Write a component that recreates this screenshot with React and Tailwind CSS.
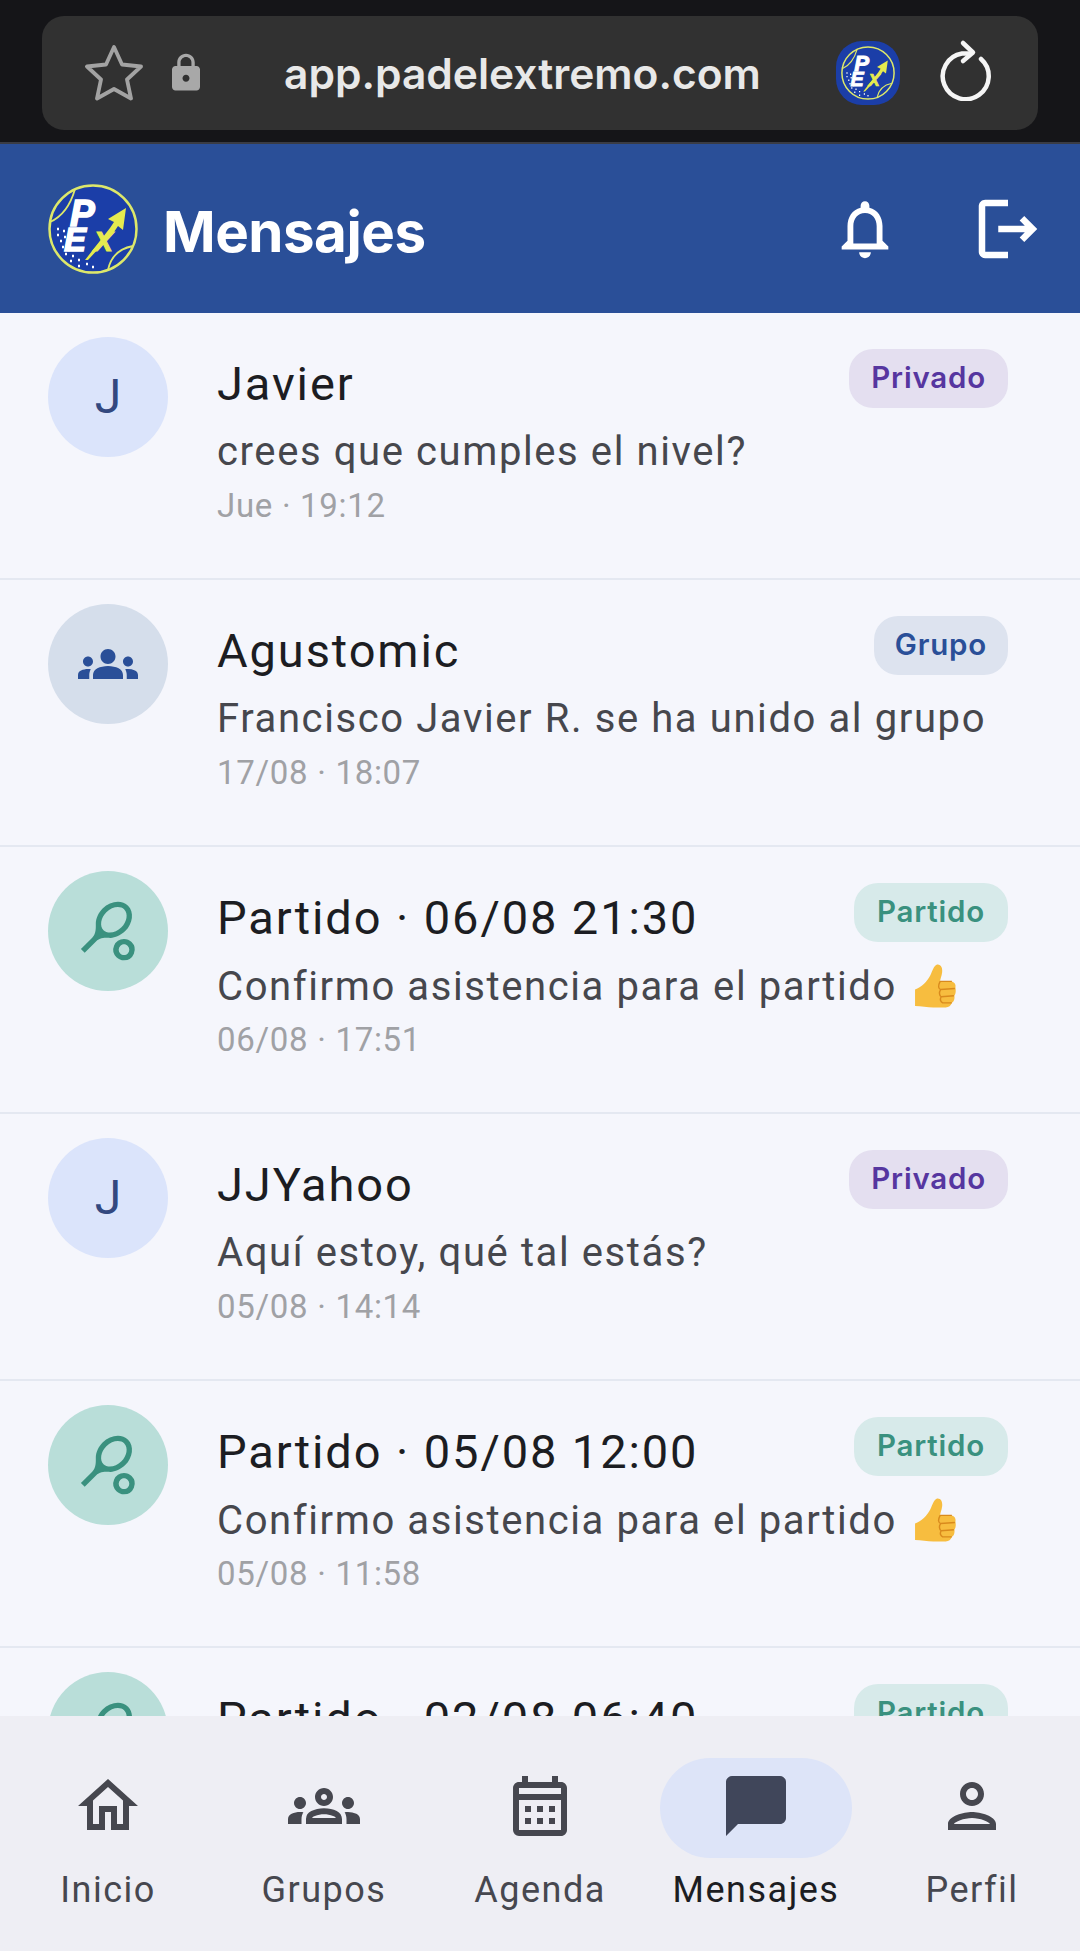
import React from "react";
import {
  MdOutlineHome, MdOutlineGroups, MdOutlineCalendarMonth, MdChatBubble, MdOutlinePerson,
  MdNotificationsNone, MdOutlineLogout, MdGroups, MdOutlineSportsTennis, MdLock,
} from "react-icons/md";

function Logo({ className }) {
  return (
    <svg viewBox="0 0 90 90" className={className}>
      <circle cx="45" cy="45" r="43.5" fill="#1b3ea8" stroke="#dde86a" strokeWidth="2.5" />
      <path d="M2 38 Q20 30 27 5" fill="none" stroke="#dde86a" strokeWidth="1.8" />
      <path d="M60 86 Q64 66 85 62" fill="none" stroke="#dde86a" strokeWidth="1.8" />
      <path d="M9 45h2M15 47h2M9 51h2M16 53h2M12 57h2M19 59h2M14 63h2M20 66h2M17 70h2M24 72h2M22 77h2M30 76h2M30 82h2M38 80h2M44 83h2" stroke="#ffffff" strokeWidth="2.4" fill="none" />
      <text x="22" y="42" fontFamily="Liberation Sans, sans-serif" fontWeight="700" fontStyle="italic" fontSize="37" fill="#ffffff" stroke="#ffffff" strokeWidth="1.6">P</text>
      <text x="16" y="67" fontFamily="Liberation Sans, sans-serif" fontWeight="700" fontStyle="italic" fontSize="33" fill="#ffffff" stroke="#ffffff" strokeWidth="1.4">E</text>
      <path d="M37 76 L62 44 L66 38 L60 35 L78 24 L75 46 L70 42 L66 48 L40 76 Z" fill="#e5ea4f" />
      <text x="46" y="67" fontFamily="Liberation Sans, sans-serif" fontWeight="700" fontStyle="italic" fontSize="28" fill="#e5ea4f" stroke="#e5ea4f" strokeWidth="1.2">X</text>
    </svg>
  );
}

function Star() {
  return (
    <svg viewBox="0 0 58 58" className="w-[58px] h-[58px]" fill="none" stroke="#a3a3a3" strokeWidth="3.8" strokeLinejoin="round">
      <path d="M29 3 L37 20.5 L56 22.5 L42 35.5 L46 54.5 L29 45 L12 54.5 L16 35.5 L2 22.5 L21 20.5 Z" />
    </svg>
  );
}

function Reload() {
  return (
    <svg viewBox="0 0 54 62" className="w-[54px] h-[62px]" fill="none" stroke="#f5f5f5" strokeWidth="4.5" strokeLinecap="round" strokeLinejoin="round">
      <path d="M43 20 A23 23 0 1 1 24 14.5 L32 14.5" />
      <path d="M25 4 L35 13.5 L25 22" />
    </svg>
  );
}

function Thumb() {
  return (
    <svg viewBox="0 0 40 44" className="w-[41px] h-[45px] inline-block align-[-9px] ml-[7px]">
      <path d="M0 25 C6 23 12 17 15 11 C17 7 18 2 21.5 0.5 C25.5 0 27 4 26.5 8 C26 12 24.5 15 24.5 17 L36 17 C39 18 40 20 39.5 23 C40 26 40 29 38.5 31 C39 34 38 37 36 38 C35 41 33 42.5 30 42.5 L18 42.5 C12 42.5 6 41 0 41 Z" fill="#f7bd3f" />
      <path d="M24.5 17 C22 22 23 24 25 25 L39 24 M25 25 C23 28 24 31 25.5 32 L38 31 M25.5 32 C24 35 25 37 27 38 L36 38 M24.5 17 L36 17" stroke="#d98a1d" strokeWidth="1.4" fill="none" />
    </svg>
  );
}

const badgeStyles = {
  Privado: "bg-[#e4dff0] text-[#5636a0] px-[22px]",
  Grupo: "bg-[#dde3ef] text-[#2a4f98] px-[21px]",
  Partido: "bg-[#d7eaea] text-[#3a917f] px-[23px]",
};

const rows = [
  { type: "Privado", name: "Javier", msg: "crees que cumples el nivel?", time: "Jue · 19:12" },
  { type: "Grupo", name: "Agustomic", msg: "Francisco Javier R. se ha unido al grupo", time: "17/08 · 18:07" },
  { type: "Partido", name: "Partido · 06/08 21:30", msg: "Confirmo asistencia para el partido ", thumb: true, time: "06/08 · 17:51" },
  { type: "Privado", name: "JJYahoo", msg: "Aquí estoy, qué tal estás?", time: "05/08 · 14:14" },
  { type: "Partido", name: "Partido · 05/08 12:00", msg: "Confirmo asistencia para el partido ", thumb: true, time: "05/08 · 11:58" },
  { type: "Partido", name: "Partido · 02/08 06:40", msg: "Confirmo asistencia para el partido ", thumb: true, time: "02/08 · 06:12" },
];

function Avatar({ type }) {
  if (type === "Privado")
    return <div className="w-[120px] h-[120px] rounded-full bg-[#dbe4fb] flex items-center justify-center text-[48px] text-[#33487f] shrink-0">J</div>;
  if (type === "Grupo")
    return <div className="w-[120px] h-[120px] rounded-full bg-[#d5deeb] flex items-center justify-center text-[#2a4f98] shrink-0"><MdGroups size={60} /></div>;
  return <div className="w-[120px] h-[120px] rounded-full bg-[#b9ded9] flex items-center justify-center text-[#3a917f] shrink-0"><MdOutlineSportsTennis size={64} /></div>;
}

function Row({ r }) {
  return (
    <div className="h-[267px] shrink-0 border-b-[2px] border-[#e4e8f1] pl-[48px] pr-[72px] pt-[24px] flex">
      <Avatar type={r.type} />
      <div className="ml-[49px] flex-1 min-w-0 relative">
        <div className="text-[47px] leading-[48px] mt-[23px] text-[#1c1d22] tracking-[1.9px] whitespace-nowrap">{r.name}</div>
        <div className="h-[44px] text-[40px] leading-[44px] mt-[22px] text-[#46474d] tracking-[1.6px] whitespace-nowrap">{r.msg}{r.thumb && <Thumb />}</div>
        <div className="text-[33px] leading-[40px] mt-[12px] text-[#a0a1a5] tracking-[0.7px] whitespace-nowrap">{r.time}</div>
        <div className={`absolute right-0 top-[12px] h-[59px] pb-[2px] rounded-[24px] flex items-center text-[29.5px] font-semibold tracking-[0.8px] font-['Inter',sans-serif] ${badgeStyles[r.type]}`}>{r.type}</div>
      </div>
    </div>
  );
}

const nav = [
  { label: "Inicio", Icon: MdOutlineHome },
  { label: "Grupos", Icon: MdOutlineGroups },
  { label: "Agenda", Icon: MdOutlineCalendarMonth },
  { label: "Mensajes", Icon: MdChatBubble, active: true },
  { label: "Perfil", Icon: MdOutlinePerson },
];

export default function App() {
  return (
    <div className="w-[1080px] h-[1951px] flex flex-col overflow-hidden bg-[#f5f6fc] font-['Roboto',sans-serif]">
      <div className="h-[144px] shrink-0 bg-[#151518] border-b-[2px] border-[#3a3c44] pt-[16px] px-[42px]">
        <div className="h-[114px] rounded-[22px] bg-[#313131] flex items-center pl-[43px] pr-[46px]">
          <Star />
          <MdLock size={42} className="text-[#a8a8a8] ml-[22px]" />
          <div className="ml-[77px] mt-[2px] text-[42.5px] font-semibold text-[#e8e8e8] font-['Inter',sans-serif] whitespace-nowrap">app.padelextremo.com</div>
          <div className="ml-auto w-[64px] h-[64px] rounded-[26px] bg-[#1b3ea8] flex items-center justify-center"><Logo className="w-[54px] h-[54px]" /></div>
          <div className="ml-[38px] mb-[6px]"><Reload /></div>
        </div>
      </div>
      <div className="h-[169px] shrink-0 bg-[#2a4f98] flex items-center pl-[48px] pr-[33px]">
        <Logo className="w-[90px] h-[90px]" />
        <div className="ml-[25px] mt-[7px] text-[56.5px] font-bold text-white font-['Inter',sans-serif] tracking-[-0.5px]">Mensajes</div>
        <MdNotificationsNone size={70} className="ml-auto text-white" />
        <MdOutlineLogout size={78} className="ml-[69px] text-white" />
      </div>
      <div className="flex-1 min-h-0 overflow-hidden flex flex-col">
        {rows.map((r, i) => <Row key={i} r={r} />)}
      </div>
      <div className="h-[235px] shrink-0 bg-[#eeeef4] flex">
        {nav.map(({ label, Icon, active }) => (
          <div key={label} className="flex-1 flex flex-col items-center pt-[42px]">
            <div className={`w-[192px] h-[100px] pb-[5px] rounded-full flex items-center justify-center ${active ? "bg-[#dde4f8] text-[#40465a]" : "text-[#46474f]"}`}>
              <Icon size={72} />
            </div>
            <div className={`mt-[10px] text-[36px] leading-[44px] tracking-[1.5px] ${active ? "text-[#1c1d22]" : "text-[#46474f]"}`}>{label}</div>
          </div>
        ))}
      </div>
    </div>
  );
}
